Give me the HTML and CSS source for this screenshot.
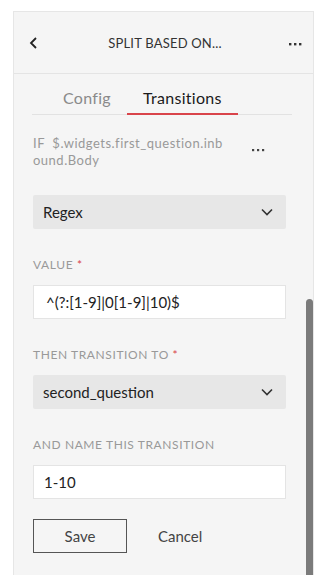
FILE: index.html
```html
<!DOCTYPE html>
<html>
<head>
<meta charset="utf-8">
<link rel="stylesheet" href="styles.css">
</head>
<body>
<div class="panel">
  <div class="header">
    <svg class="back" width="10" height="12" viewBox="0 0 10 12"><path d="M7 1 L2 6 L7 11" fill="none" stroke="#222" stroke-width="1.8"/></svg>
    <div class="title">SPLIT BASED ON...</div>
    <svg class="dots" width="14" height="4" viewBox="0 0 14 4"><rect x="0" y="1" width="2.4" height="2.4" fill="#333"/><rect x="5" y="1" width="2.4" height="2.4" fill="#333"/><rect x="10" y="1" width="2.4" height="2.4" fill="#333"/></svg>
  </div>
  <div class="tabs">
    <div class="tab">Config</div>
    <div class="tab active">Transitions</div>
  </div>
  <div class="content">
    <div class="cond">
      <div class="cond-text">IF&nbsp; $.widgets.first_question.inbound.Body</div>
      <svg class="cond-dots" width="14" height="4" viewBox="0 0 14 4"><rect x="0" y="1" width="2.2" height="2.2" fill="#444"/><rect x="5" y="1" width="2.2" height="2.2" fill="#444"/><rect x="10" y="1" width="2.2" height="2.2" fill="#444"/></svg>
    </div>
    <div class="select first">
      <span>Regex</span>
      <svg width="12" height="8" viewBox="0 0 12 8"><path d="M1 1.5 L6 6.5 L11 1.5" fill="none" stroke="#333" stroke-width="1.6"/></svg>
    </div>
    <div class="label">VALUE <span class="req">*</span></div>
    <div class="input pad">^(?:[1-9]|0[1-9]|10)$</div>
    <div class="label">THEN TRANSITION TO <span class="req">*</span></div>
    <div class="select">
      <span>second_question</span>
      <svg width="12" height="8" viewBox="0 0 12 8"><path d="M1 1.5 L6 6.5 L11 1.5" fill="none" stroke="#333" stroke-width="1.6"/></svg>
    </div>
    <div class="label">AND NAME THIS TRANSITION</div>
    <div class="input">1-10</div>
    <div class="actions">
      <div class="btn">Save</div>
      <div class="link">Cancel</div>
    </div>
  </div>
  <div class="scrollbar"></div>
</div>
</body>
</html>
```
FILE: styles.css
```css
* { box-sizing: border-box; }
html, body { margin: 0; padding: 0; background: #fff; }
body {
  font-family: Lato, "Open Sans", sans-serif;
  padding: 11px 0 0 13px;
  height: 575px;
  overflow: hidden;
}
.panel {
  position: relative;
  width: 301px;
  height: 564px;
  background: #f5f5f5;
  border: 1px solid #e6e6e6;
  border-bottom: none;
  overflow: hidden;
}
.header {
  height: 62px;
  border-bottom: 1px solid #e4e4e4;
  display: flex;
  align-items: center;
  padding: 0 10px 0 15px;
}
.back { display: block; }
.title {
  flex: 1;
  text-align: center;
  font-size: 13px;
  color: #333;
  letter-spacing: 0.2px;
  padding-left: 2px;
}
.dots { display: block; margin-top: 3px; }
.tabs {
  margin: 0 21px 0 18px;
  height: 41px;
  border-bottom: 1px solid #e2e2e2;
  display: flex;
  align-items: flex-end;
  padding-left: 15px;
}
.tab {
  font-size: 16px;
  color: #8a8a8a;
  padding: 0 16px 6px;
  letter-spacing: 0.3px;
  margin-bottom: -1px;
  border-bottom: 2px solid transparent;
}
.tab.active {
  color: #1a1a1a;
  border-bottom-color: #d9444a;
}
.content {
  padding: 20px 27px 0 19px;
}
.cond {
  display: flex;
  align-items: flex-start;
}
.cond-text {
  width: 194px;
  font-size: 13px;
  line-height: 17px;
  color: #999;
  letter-spacing: 0.5px;
  word-break: break-all;
}
.cond-dots { display: block; margin: 13px 0 0 25px; }
.select {
  height: 34px;
  background: #e7e7e7;
  border-radius: 2px;
  display: flex;
  align-items: center;
  justify-content: space-between;
  padding: 0 13px 0 10px;
  font-size: 15px;
  color: #222;
}
.select.first { margin-top: 26px; }
.select svg { display: block; }
.label {
  font-size: 12px;
  line-height: 16px;
  letter-spacing: 0.6px;
  color: #999;
  margin: 28px 0 12px;
}
.req { color: #d9444a; }
.input {
  height: 34px;
  background: #fff;
  border: 1px solid #e4e4e4;
  display: flex;
  align-items: center;
  padding: 0 10px;
  font-size: 15px;
  color: #222;
}
.input.pad { padding-left: 12px; }
.actions {
  display: flex;
  align-items: center;
  margin-top: 20px;
}
.btn {
  width: 94px;
  height: 34px;
  border: 1px solid #555;
  display: flex;
  align-items: center;
  justify-content: center;
  font-size: 15px;
  color: #444;
}
.link {
  margin-left: 31px;
  font-size: 15px;
  color: #444;
}
.scrollbar {
  position: absolute;
  right: 0;
  top: 287px;
  bottom: 0;
  width: 7px;
  background: #7b7b7b;
  border-radius: 4px 4px 0 0;
}
```
